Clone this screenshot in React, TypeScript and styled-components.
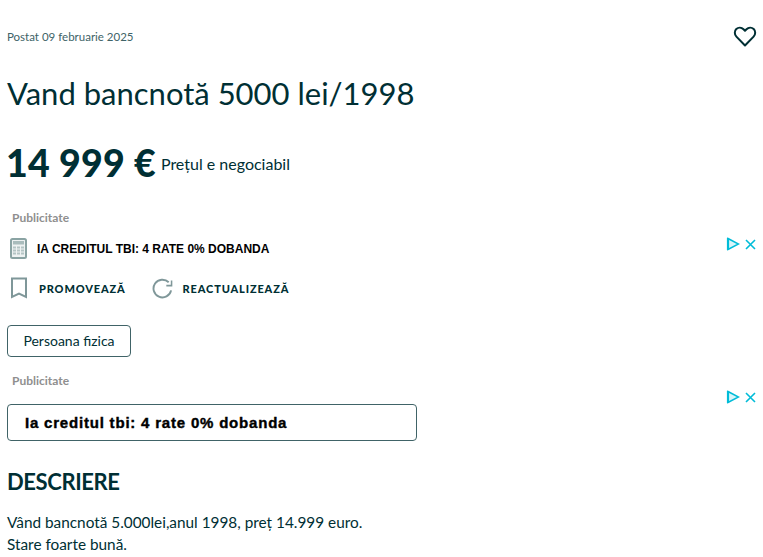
import styled, { createGlobalStyle } from 'styled-components';

const GlobalStyle = createGlobalStyle`
  html, body {
    margin: 0;
    background: #fff;
    overflow: hidden;
  }
  body {
    font-family: 'Lato', 'Liberation Sans', sans-serif;
    color: #002f34;
  }
`;

const Page = styled.div`
  display: flex;
  flex-direction: column;
  height: 557px;
  overflow: hidden;
  padding-left: 7px;
  box-sizing: border-box;
`;

const TopRow = styled.div`
  display: flex;
  align-items: center;
  justify-content: space-between;
  height: 24px;
  margin-top: 24px;
  padding-right: 6px;
`;

const Posted = styled.span`
  font-size: 11.5px;
  color: #406367;
`;

const Title = styled.h1`
  margin: 25px 0 0;
  font-size: 31px;
  line-height: 40px;
  font-weight: 400;
`;

const PriceRow = styled.div`
  display: flex;
  align-items: center;
  gap: 5px;
  margin: 25px 0 0 -1px;
  height: 48px;
`;

const Price = styled.span`
  font-size: 37.5px;
  font-weight: 900;
  letter-spacing: 0.2px;
`;

const Negotiable = styled.span`
  padding-top: 3px;
  font-size: 16px;
`;

const AdLabel = styled.div`
  margin: 0 0 0 5px;
  font-size: 12px;
  line-height: 14px;
  font-weight: 700;
  color: #8f8f8f;
`;

const AdSlot = styled.div<{ $top: number }>`
  position: relative;
  margin-top: ${(p) => p.$top}px;
`;

const AdChoices = styled.div<{ $top: number }>`
  position: absolute;
  right: 7px;
  top: ${(p) => p.$top}px;
  display: flex;
  align-items: center;
  gap: 5px;
`;

const BannerRow = styled.div`
  display: flex;
  align-items: center;
  gap: 10px;
  height: 24px;
  margin: 12px 0 0 3px;
`;

const BannerText = styled.span`
  font-family: 'Liberation Sans', Arial, sans-serif;
  font-size: 12px;
  font-weight: 700;
  color: #000;
`;

const ActionRow = styled.div`
  display: flex;
  align-items: center;
  gap: 26px;
  height: 24px;
  margin-top: 15px;
  margin-left: 3px;
`;

const Action = styled.div`
  display: flex;
  align-items: center;
  gap: 10px;
`;

const ActionLabel = styled.span`
  font-size: 11px;
  font-weight: 900;
  letter-spacing: 0.85px;
  text-transform: uppercase;
`;

const Tag = styled.div`
  align-self: flex-start;
  display: flex;
  align-items: center;
  justify-content: center;
  box-sizing: border-box;
  width: 124px;
  height: 32px;
  margin-top: 25px;
  padding-bottom: 1px;
  border: 1px solid #406367;
  border-radius: 4px;
  font-size: 14px;
`;

const AdField = styled.div`
  display: flex;
  align-items: center;
  box-sizing: border-box;
  width: 410px;
  height: 37px;
  margin-top: 16px;
  padding-left: 17px;
  border: 1px solid #406367;
  border-radius: 4px;
  font-family: 'Liberation Sans', Arial, sans-serif;
  font-size: 15px;
  font-weight: 700;
  letter-spacing: 0.8px;
  -webkit-text-stroke: 0.4px #000;
  color: #000;
`;

const SectionTitle = styled.h2`
  margin: 27px 0 0;
  font-size: 22px;
  line-height: 28px;
  font-weight: 700;
  letter-spacing: -0.4px;
  text-transform: uppercase;
`;

const Description = styled.p`
  margin: 15px 0 0;
  font-size: 15.35px;
  line-height: 22px;
`;

const CalculatorIcon = styled.svg`
  margin-top: -2px;
`;

const Heart = () => (
  <svg width="24" height="24" viewBox="0 0 24 24" fill="none" stroke="#002f34" strokeWidth="2" strokeLinejoin="round">
    <path d="M12 21.5 3.4 12.6C1.3 10.4 1.3 7 3.3 5 5.3 3.1 8.5 3.2 10.5 5.2L12 6.8l1.5-1.6c2-2 5.2-2.1 7.2-.2 2 2 2 5.4-.1 7.6L12 21.5Z" />
  </svg>
);

const Calculator = () => (
  <CalculatorIcon width="17" height="21" viewBox="0 0 17 21">
    <rect x="1" y="1" width="15" height="19" rx="1.5" fill="#eef2f2" stroke="#8aa3a3" strokeWidth="2" />
    <rect x="3" y="3" width="11" height="3.5" fill="#a9bcbc" />
    {[8.5, 11.5, 14.5].map((y) =>
      [3, 7, 11].map((x) => <rect key={`${x}-${y}`} x={x} y={y} width="3" height="2" fill="#b4c4c4" />),
    )}
  </CalculatorIcon>
);

const Bookmark = () => (
  <svg width="19" height="22" viewBox="0 0 19 22" fill="none" stroke="#7f9799" strokeWidth="2" strokeLinejoin="miter">
    <path d="M2 1.5h14v18.5l-7-3.5-7 3.5V1.5Z" />
  </svg>
);

const Refresh = () => (
  <svg width="21" height="21" viewBox="0 0 22 22" fill="none" stroke="#7f9799" strokeWidth="2">
    <path d="M20 13A9.3 9.3 0 1 1 17.5 4.5" />
    <path d="M20.5 2.5v5.5H15" strokeWidth="1.6" />
  </svg>
);

const AdMarks = () => (
  <>
    <svg width="14" height="14" viewBox="0 0 14 14" fill="#d9f5fa" stroke="#00bcd8" strokeWidth="1.5">
      <path d="M2 1.5 12.5 7 2 12.5V1.5Z" />
      <path d="M2 1v12" strokeWidth="2.2" />
    </svg>
    <svg width="11" height="11" viewBox="0 0 11 11" fill="none" stroke="#00bcd8" strokeWidth="1.6">
      <path d="M1 1l9 9M10 1l-9 9" />
    </svg>
  </>
);

export default function App() {
  return (
    <>
      <GlobalStyle />
      <Page>
        <TopRow>
          <Posted>Postat 09 februarie 2025</Posted>
          <Heart />
        </TopRow>
        <Title>Vand bancnotă 5000 lei/1998</Title>
        <PriceRow>
          <Price>14 999 €</Price>
          <Negotiable>Prețul e negociabil</Negotiable>
        </PriceRow>
        <AdSlot $top={25}>
          <AdLabel>Publicitate</AdLabel>
          <BannerRow>
            <Calculator />
            <BannerText>IA CREDITUL TBI: 4 RATE 0% DOBANDA</BannerText>
          </BannerRow>
          <AdChoices $top={26}>
            <AdMarks />
          </AdChoices>
        </AdSlot>
        <ActionRow>
          <Action>
            <Bookmark />
            <ActionLabel>Promovează</ActionLabel>
          </Action>
          <Action>
            <Refresh />
            <ActionLabel>Reactualizează</ActionLabel>
          </Action>
        </ActionRow>
        <Tag>Persoana fizica</Tag>
        <AdSlot $top={17}>
          <AdLabel>Publicitate</AdLabel>
          <AdField>Ia creditul tbi: 4 rate 0% dobanda</AdField>
          <AdChoices $top={16}>
            <AdMarks />
          </AdChoices>
        </AdSlot>
        <SectionTitle>Descriere</SectionTitle>
        <Description>
          Vând bancnotă 5.000lei,anul 1998, preț 14.999 euro.
          <br />
          Stare foarte bună.
        </Description>
      </Page>
    </>
  );
}
